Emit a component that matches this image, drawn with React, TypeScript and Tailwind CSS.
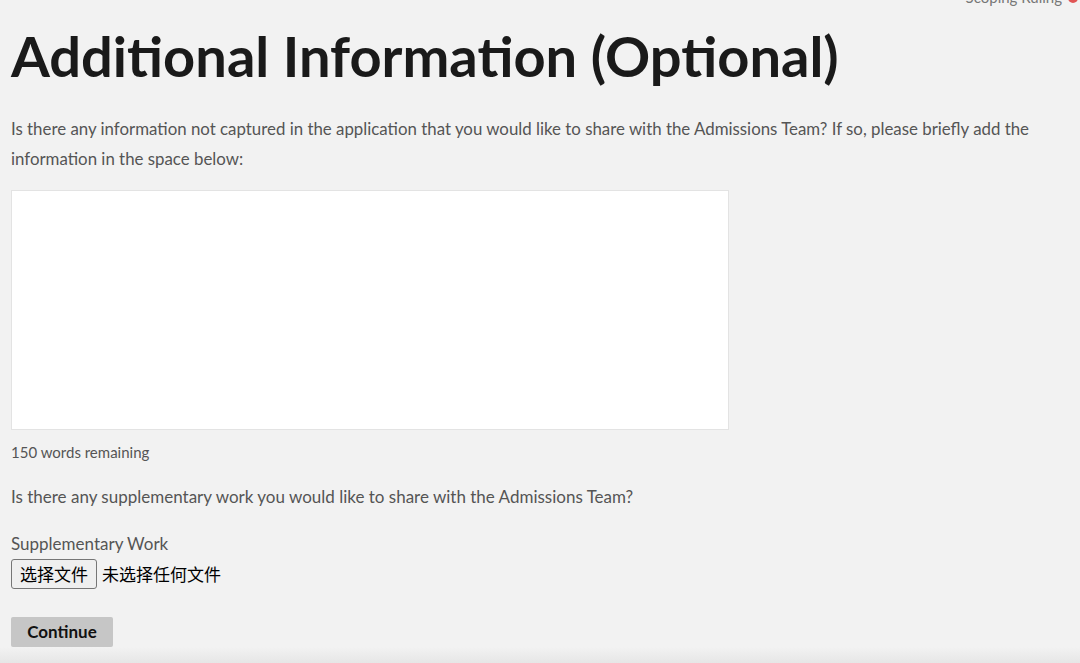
export default function App() {
  return (
    <div className="min-h-[663px] bg-[#f2f2f2] font-['Lato','Noto_Sans_CJK_SC',sans-serif] text-[#555] relative overflow-hidden">
      <div className="flex justify-end pr-[2px] -mt-[11px] h-[12px] leading-[16px] text-[15px] text-[#777]">
        Scoping Ruling
        <span className="ml-[6px] mt-[4px] w-[10px] h-[10px] rounded-full bg-[#e05555]" />
      </div>

      <div className="px-[11px]">
        <h1 className="mt-[23px] text-[56px] leading-[64px] font-bold text-[#1a1a1a]">
          Additional Information (Optional)
        </h1>

        <p className="mt-[26px] text-[16.85px] leading-[30px] max-w-[1040px]">
          Is there any information not captured in the application that you would like to share with the Admissions Team? If so, please briefly add the information in the space below:
        </p>

        <textarea className="mt-[16px] block w-[718px] h-[240px] bg-white border border-[#e3e3e3] resize-none outline-none" />

        <div className="mt-[12px] text-[15px] leading-[20px]">150 words remaining</div>

        <p className="mt-[25px] text-[17px] leading-[20px]">
          Is there any supplementary work you would like to share with the Admissions Team?
        </p>

        <div className="mt-[27px] text-[17px] leading-[20px]">Supplementary Work</div>

        <div className="mt-[5px] flex items-center text-[17px] font-['Noto_Sans_CJK_SC',sans-serif]">
          <span className="h-[30px] px-[8px] flex items-center bg-[#efefef] border border-[#767676] rounded-[3px] text-black">
            选择文件
          </span>
          <span className="ml-[5px] text-black">未选择任何文件</span>
        </div>

        <button className="mt-[28px] w-[102px] h-[30px] bg-[#c6c6c6] rounded-[2px] text-[17px] font-bold text-[#111]">
          Continue
        </button>
      </div>

      <div className="absolute left-0 right-0 bottom-0 h-[16px] bg-gradient-to-b from-transparent to-[#e6e6e6]" />
    </div>
  );
}
